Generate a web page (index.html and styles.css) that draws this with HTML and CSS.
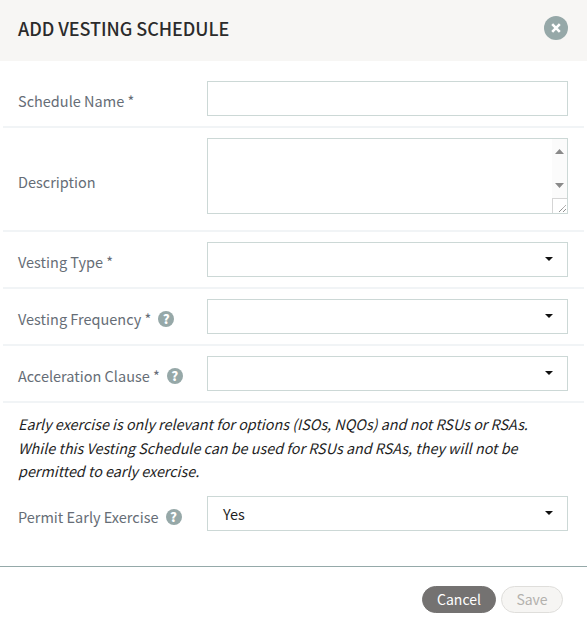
FILE: index.html
```html
<!DOCTYPE html>
<html lang="en">
<head>
<meta charset="utf-8">
<title>Add Vesting Schedule</title>
<link rel="stylesheet" href="styles.css">
</head>
<body>
<div class="modal">
  <header class="modal-header">
    <h1 class="modal-title">ADD VESTING SCHEDULE</h1>
    <button class="close-btn" type="button" aria-label="Close">
      <svg width="10" height="10" viewBox="0 0 10 10"><path d="M1.2 1.2L8.8 8.8M8.8 1.2L1.2 8.8" stroke="#fff" stroke-width="2.6" fill="none"/></svg>
    </button>
  </header>
  <form class="modal-body">
    <div class="row row-first">
      <label class="label">Schedule Name *</label>
      <div class="field"></div>
    </div>
    <div class="row row-desc">
      <label class="label label-desc">Description</label>
      <div class="field field-area">
        <div class="scrollbar">
          <svg class="arrows" width="15" height="62" viewBox="0 0 15 62"><path d="M3 15L7.5 10L12 15ZM3 44H12L7.5 49Z" fill="#8a8a8a"/></svg>
          <div class="grip"><svg width="15" height="15" viewBox="0 0 15 15"><path d="M6 13L13 6M10 13L13 10" stroke="#666" stroke-width="1" stroke-dasharray="1 .6" fill="none"/></svg></div>
        </div>
      </div>
    </div>
    <div class="row">
      <label class="label">Vesting Type *</label>
      <div class="field field-select"><span class="caret"></span></div>
    </div>
    <div class="row">
      <label class="label">Vesting Frequency * <span class="help">?</span></label>
      <div class="field field-select"><span class="caret"></span></div>
    </div>
    <div class="row">
      <label class="label">Acceleration Clause * <span class="help">?</span></label>
      <div class="field field-select"><span class="caret"></span></div>
    </div>
    <p class="note">Early exercise is only relevant for options (ISOs, NQOs) and not RSUs or RSAs. While this Vesting Schedule can be used for RSUs and RSAs, they will not be permitted to early exercise.</p>
    <div class="row row-last">
      <label class="label label-permit">Permit Early Exercise <span class="help">?</span></label>
      <div class="field field-select"><span class="value">Yes</span><span class="caret"></span></div>
    </div>
  </form>
  <footer class="modal-footer">
    <button class="btn btn-cancel" type="button">Cancel</button>
    <button class="btn btn-save" type="button" disabled>Save</button>
  </footer>
</div>
</body>
</html>
```
FILE: styles.css
```css
* { box-sizing: border-box; }
html, body { margin: 0; padding: 0; background: #fff; }
body { font-family: "Noto Sans CJK SC", "Liberation Sans", sans-serif; font-size: 14.5px; line-height: 24px; color: #1f1f1f; }
.modal { width: 587px; height: 632px; overflow: hidden; }
.modal-header { height: 61px; background: #f7f6f4; display: flex; align-items: center; justify-content: space-between; padding: 0 19px 5px 18px; }
.modal-title { margin: 0; font-size: 18px; font-weight: 500; line-height: 24px; letter-spacing: -0.05px; color: #2b2b2b; }
.close-btn { width: 24px; height: 24px; border: 0; border-radius: 50%; background: #96a8a8; padding: 0; display: flex; align-items: center; justify-content: center; }
.modal-body { padding: 20px 3px 0; height: 505px; }
.row { display: flex; align-items: center; padding: 0 16px 10px 15px; margin-bottom: 10px; border-bottom: 2px solid #f1f4f6; }
.row-desc { padding-bottom: 16px; }
.row-last { border: 0; padding-bottom: 0; margin: 0; }
.label { width: 189px; flex: none; color: #666d76; display: flex; align-items: center; padding-top: 5px; }
.label-desc { padding-top: 12px; }
.label-permit { padding-top: 8px; }
.help { width: 16px; height: 16px; border-radius: 50%; background: #96a8a8; color: #fff; font-size: 13px; font-weight: 900; line-height: 16px; text-align: center; margin-left: 7px; }
.field { flex: 1; height: 35px; border: 1px solid #ccd8d6; background: #fff; display: flex; align-items: center; justify-content: space-between; position: relative; }
.field-area { height: 76px; justify-content: flex-end; }
.scrollbar { width: 15px; height: 74px; background: #fbfbfb; position: relative; display: flex; flex-direction: column; justify-content: space-between; }
.arrows { display: block; }
.grip { height: 15px; width: 15px; background: #fff; border: 1px solid #d5d5d5; border-width: 1px 0 0 1px; position: absolute; right: 0; bottom: 0; }
.grip svg { display: block; }
.value { padding-left: 15px; padding-top: 1px; color: #1f1f1f; }
.caret { width: 0; height: 0; border: 4px solid transparent; border-top-color: #111; border-bottom: 0; margin-left: auto; margin-right: 14px; margin-top: -1px; }
.note { margin: -1px 40px 13px 15px; font-style: italic; font-size: 14.35px; line-height: 23.5px; color: #1f1f1f; }
.modal-footer { border-top: 1px solid #95a9a9; display: flex; justify-content: flex-end; gap: 5px; padding: 19px 24px 0; }
.btn { font: inherit; font-size: 14px; height: 27px; line-height: 25px; border-radius: 14px; padding: 0; }
.btn-cancel { width: 74px; background: #747271; border: 1px solid #747271; color: #fff; }
.btn-save { width: 62px; background: #f6f5f3; border: 1px solid #dfdedb; color: #b3b1ad; }
```
